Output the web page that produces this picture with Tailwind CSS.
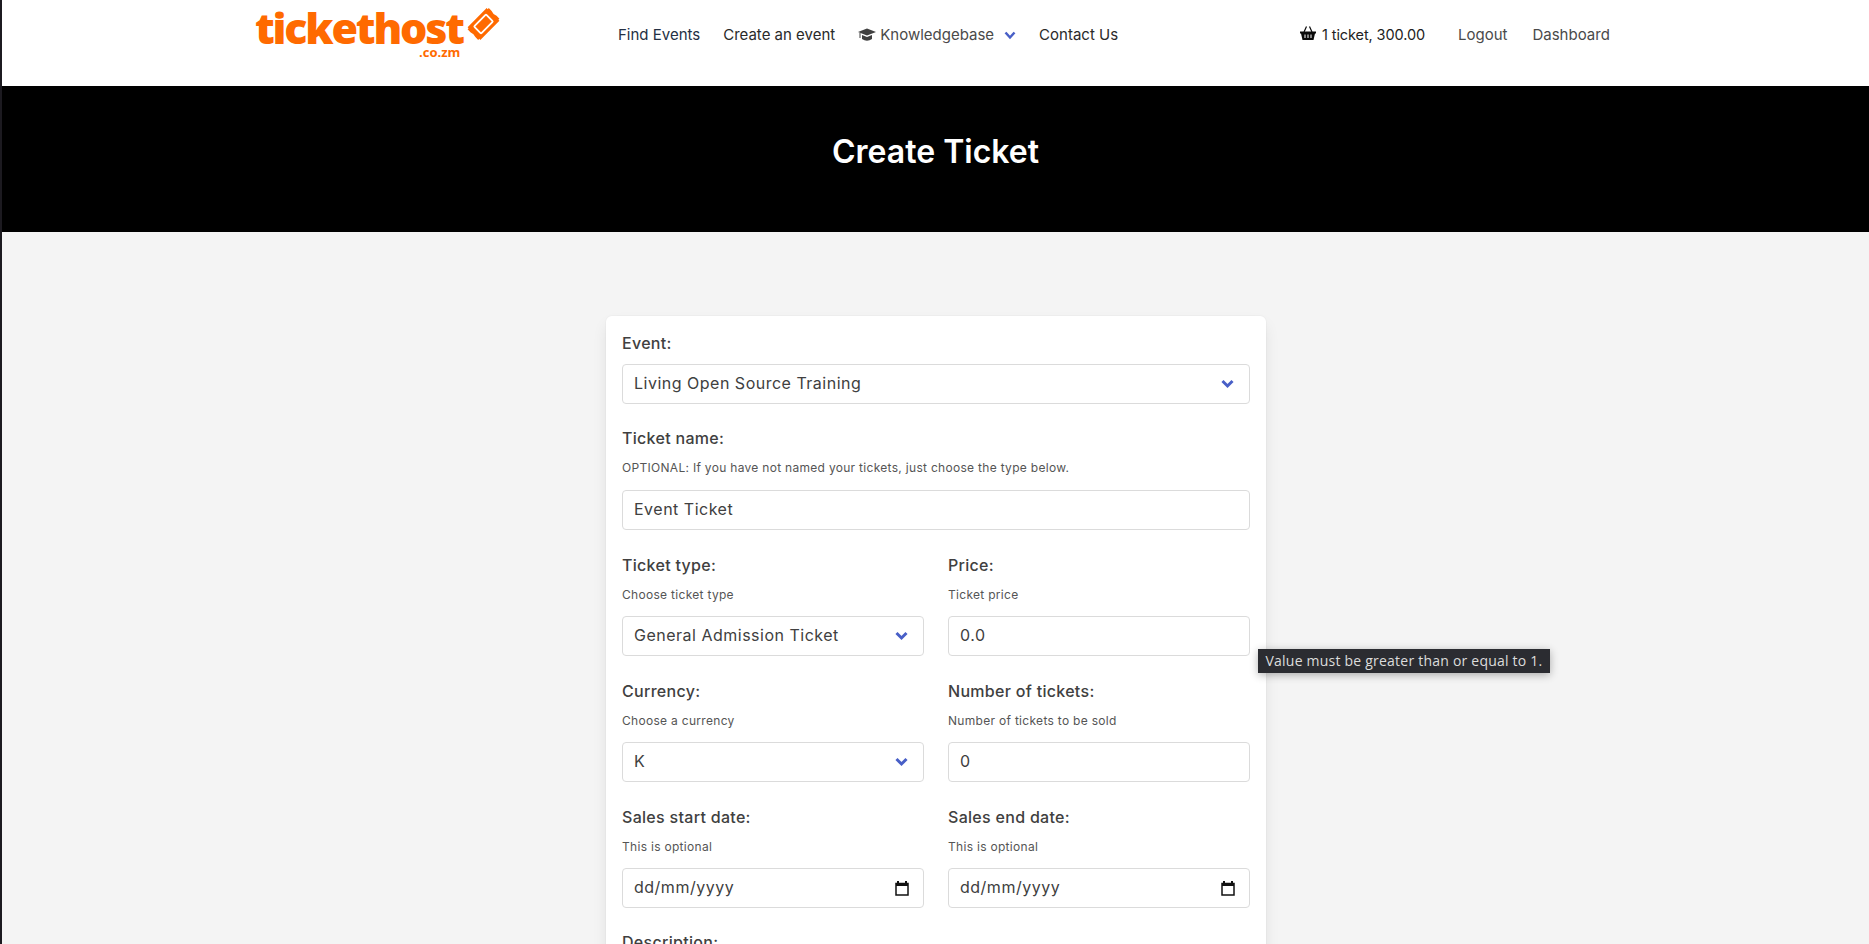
<!DOCTYPE html>
<html lang="en">
<head>
  <meta charset="UTF-8" />
  <title>Create Ticket</title>
  <script src="https://cdn.jsdelivr.net/npm/@tailwindcss/browser@4"></script>
</head>
<body class="h-[944px] overflow-hidden flex bg-[#f4f4f4] text-[#404040] font-['Inter','Noto_Sans',sans-serif]">

  <div class="w-[2px] shrink-0 bg-[#1c1a20]"></div>

  <div class="flex-1 min-w-0">
    <!-- nav -->
    <header class="h-[86px] bg-white relative text-[15px]">
      <div class="h-[70px] flex items-center">
        <a class="w-[253px] ml-[253px] h-[86px] -mb-[16px] flex flex-col shrink-0 font-['Open_Sans',sans-serif] text-[#ff6a00] font-extrabold relative">
          <span class="text-[43px] leading-[40px] mt-[8px] tracking-[-2.200px] whitespace-nowrap">tickethost</span>
          <span class="text-[13px] leading-[9px] font-bold ml-[164px]">.co.zm</span>
          <svg class="absolute left-[212px] top-[7px]" width="33" height="34" viewBox="0 0 33 34" fill="none">
            <g transform="rotate(-45 16.500 17)">
              <path d="M1.500 9.500 H3 V8 H30 V9.500 H31.500 V13.500 Q30 17 31.500 20.500 V24.500 H30 V26 H3 V24.500 H1.500 V20.500 Q3 17 1.500 13.500 Z" fill="#ff6a00" />
              <rect x="8" y="12" width="17" height="10" rx="1" fill="#ff6a00" stroke="#fff" stroke-width="1.800" />
            </g>
          </svg>
        </a>

        <nav class="flex items-center ml-[110px] gap-[23px]">
          <a class="text-[#243044]">Find Events</a>
          <a class="text-[#2a2a2a]">Create an event</a>
          <a class="flex items-center text-[#4a4a4a]">
            <svg class="mr-[4px]" width="18" height="14" viewBox="0 0 18 14" fill="#404040"><path d="M9 0.500 L18 4 L9 7.500 L0 4 Z" /><path d="M4 7 L9 9 L14 7 V11 Q9 14.500 4 11 Z" /><path d="M1.500 5 V10 H2.500 V5 Z" /></svg>
            Knowledgebase
            <svg class="ml-[10px]" width="12" height="9" viewBox="0 0 12 9" fill="none" stroke="#485fc7" stroke-width="2.500"><path d="M1.500 1.500 L6 6.500 L10.500 1.500" /></svg>
          </a>
          <a class="text-[#2a2a2a]">Contact Us</a>
        </nav>
      </div>

      <div class="absolute left-[1298px] top-0 h-[70px] flex items-center text-[14.5px]">
        <svg class="mr-[6px] -mt-[4px]" width="16" height="14" viewBox="0 0 16 14" fill="#0a0a0a">
          <path d="M4 6 L6.500 0.500 M12 6 L9.500 0.500" stroke="#0a0a0a" stroke-width="1.200" />
          <path d="M0 5.500 H16 V7.500 H15 L13.500 14 H2.500 L1 7.500 H0 Z" />
          <path d="M5 8.500 V12 M8 8.500 V12 M11 8.500 V12" stroke="#fff" stroke-width="1" />
        </svg>
        <span class="text-[#222] tracking-[-0.1px]">1 ticket, 300.00</span>
      </div>
      <div class="absolute left-[1456px] top-0 h-[70px] flex items-center gap-[25px] text-[#4a4a4a]">
        <a>Logout</a>
        <a>Dashboard</a>
      </div>
    </header>

    <!-- title -->
    <section class="h-[146px] bg-black flex items-center justify-center pb-[14px]">
      <h1 class="text-white text-[32px] font-semibold">Create Ticket</h1>
    </section>

    <!-- form card -->
    <main class="pt-[84px] pl-[1px] flex justify-center">
      <form class="w-[660px] h-[700px] bg-white rounded-md shadow-[0_0.5em_1em_-0.125em_rgba(10,10,10,0.1),0_0_0_1px_rgba(10,10,10,0.02)] px-[16px] pt-[15px] relative">
        <label class="block text-[16px] leading-[24px] font-medium tracking-[0.3px]">Event:</label>
        <div class="relative mt-[9px]">
          <select class="appearance-none w-full h-[40px] border border-[#dbdbdb] rounded-[4px] px-[11px] pb-[2px] text-[16px] tracking-[0.5px] text-[#404040] bg-white">
            <option>Living Open Source Training</option>
          </select>
          <svg class="absolute right-[16px] top-[15px]" width="13" height="10" viewBox="0 0 13 10" fill="none" stroke="#485fc7" stroke-width="3"><path d="M1.500 2 L6.500 7 L11.500 2" /></svg>
        </div>

        <label class="block text-[16px] leading-[24px] font-medium tracking-[0.3px] mt-[22px]">Ticket name:</label>
        <p class="text-[12px] leading-[16px] tracking-[0.3px] text-[#555] mt-[10px]">OPTIONAL: If you have not named your tickets, just choose the type below.</p>
        <input class="block w-full h-[40px] border border-[#dbdbdb] rounded-[4px] px-[11px] pb-[2px] text-[16px] tracking-[0.5px] mt-[14px]" value="Event Ticket" />

        <div class="grid grid-cols-2 gap-x-[24px] mt-[23px]">
          <div>
            <label class="block text-[16px] leading-[24px] font-medium tracking-[0.3px]">Ticket type:</label>
            <p class="text-[12px] leading-[16px] tracking-[0.3px] text-[#555] mt-[10px]">Choose ticket type</p>
            <div class="relative mt-[13px]">
              <select class="appearance-none w-full h-[40px] border border-[#dbdbdb] rounded-[4px] px-[11px] pb-[2px] text-[16px] tracking-[0.5px] text-[#404040] bg-white">
                <option>General Admission Ticket</option>
              </select>
              <svg class="absolute right-[16px] top-[15px]" width="13" height="10" viewBox="0 0 13 10" fill="none" stroke="#485fc7" stroke-width="3"><path d="M1.500 2 L6.500 7 L11.500 2" /></svg>
            </div>
          </div>
          <div>
            <label class="block text-[16px] leading-[24px] font-medium tracking-[0.3px]">Price:</label>
            <p class="text-[12px] leading-[16px] tracking-[0.3px] text-[#555] mt-[10px]">Ticket price</p>
            <input class="block w-full h-[40px] border border-[#dbdbdb] rounded-[4px] px-[11px] pb-[2px] text-[16px] tracking-[0.5px] mt-[13px]" value="0.0" />
          </div>
          <div class="mt-[23px]">
            <label class="block text-[16px] leading-[24px] font-medium tracking-[0.3px]">Currency:</label>
            <p class="text-[12px] leading-[16px] tracking-[0.3px] text-[#555] mt-[10px]">Choose a currency</p>
            <div class="relative mt-[13px]">
              <select class="appearance-none w-full h-[40px] border border-[#dbdbdb] rounded-[4px] px-[11px] pb-[2px] text-[16px] tracking-[0.5px] text-[#404040] bg-white">
                <option>K</option>
              </select>
              <svg class="absolute right-[16px] top-[15px]" width="13" height="10" viewBox="0 0 13 10" fill="none" stroke="#485fc7" stroke-width="3"><path d="M1.500 2 L6.500 7 L11.500 2" /></svg>
            </div>
          </div>
          <div class="mt-[23px]">
            <label class="block text-[16px] leading-[24px] font-medium tracking-[0.3px]">Number of tickets:</label>
            <p class="text-[12px] leading-[16px] tracking-[0.3px] text-[#555] mt-[10px]">Number of tickets to be sold</p>
            <input class="block w-full h-[40px] border border-[#dbdbdb] rounded-[4px] px-[11px] pb-[2px] text-[16px] tracking-[0.5px] mt-[13px]" value="0" />
          </div>
          <div class="mt-[23px]">
            <label class="block text-[16px] leading-[24px] font-medium tracking-[0.3px]">Sales start date:</label>
            <p class="text-[12px] leading-[16px] tracking-[0.3px] text-[#555] mt-[10px]">This is optional</p>
            <div class="flex items-center justify-between h-[40px] border border-[#dbdbdb] rounded-[4px] pl-[11px] pr-[14px] text-[16px] tracking-[0.5px] mt-[13px]">
              <span class="-mt-[2px]">dd/mm/yyyy</span>
              <svg width="14" height="15" viewBox="0 0 14 15" fill="none"><path d="M3 0 V3 M11 0 V3" stroke="#111" stroke-width="2" /><rect x="1" y="2.500" width="12" height="11.500" stroke="#111" stroke-width="1.500" /><rect x="1" y="2" width="12" height="3" fill="#111" /></svg>
            </div>
          </div>
          <div class="mt-[23px]">
            <label class="block text-[16px] leading-[24px] font-medium tracking-[0.3px]">Sales end date:</label>
            <p class="text-[12px] leading-[16px] tracking-[0.3px] text-[#555] mt-[10px]">This is optional</p>
            <div class="flex items-center justify-between h-[40px] border border-[#dbdbdb] rounded-[4px] pl-[11px] pr-[14px] text-[16px] tracking-[0.5px] mt-[13px]">
              <span class="-mt-[2px]">dd/mm/yyyy</span>
              <svg width="14" height="15" viewBox="0 0 14 15" fill="none"><path d="M3 0 V3 M11 0 V3" stroke="#111" stroke-width="2" /><rect x="1" y="2.500" width="12" height="11.500" stroke="#111" stroke-width="1.500" /><rect x="1" y="2" width="12" height="3" fill="#111" /></svg>
            </div>
          </div>
        </div>

        <label class="block text-[16px] leading-[24px] font-medium tracking-[0.3px] mt-[22px]">Description:</label>

        <!-- validation tooltip -->
        <div class="absolute left-[652px] top-[333px] w-[292px] h-[24px] flex items-center justify-center pb-[1px] bg-[#2b2c31] text-[#dcdcdc] text-[14px] tracking-[0.22px] whitespace-nowrap font-['Open_Sans',sans-serif] shadow-[0_2px_8px_rgba(0,0,0,0.3)]">Value must be greater than or equal to 1.</div>
      </form>
    </main>
  </div>
</body>
</html>
